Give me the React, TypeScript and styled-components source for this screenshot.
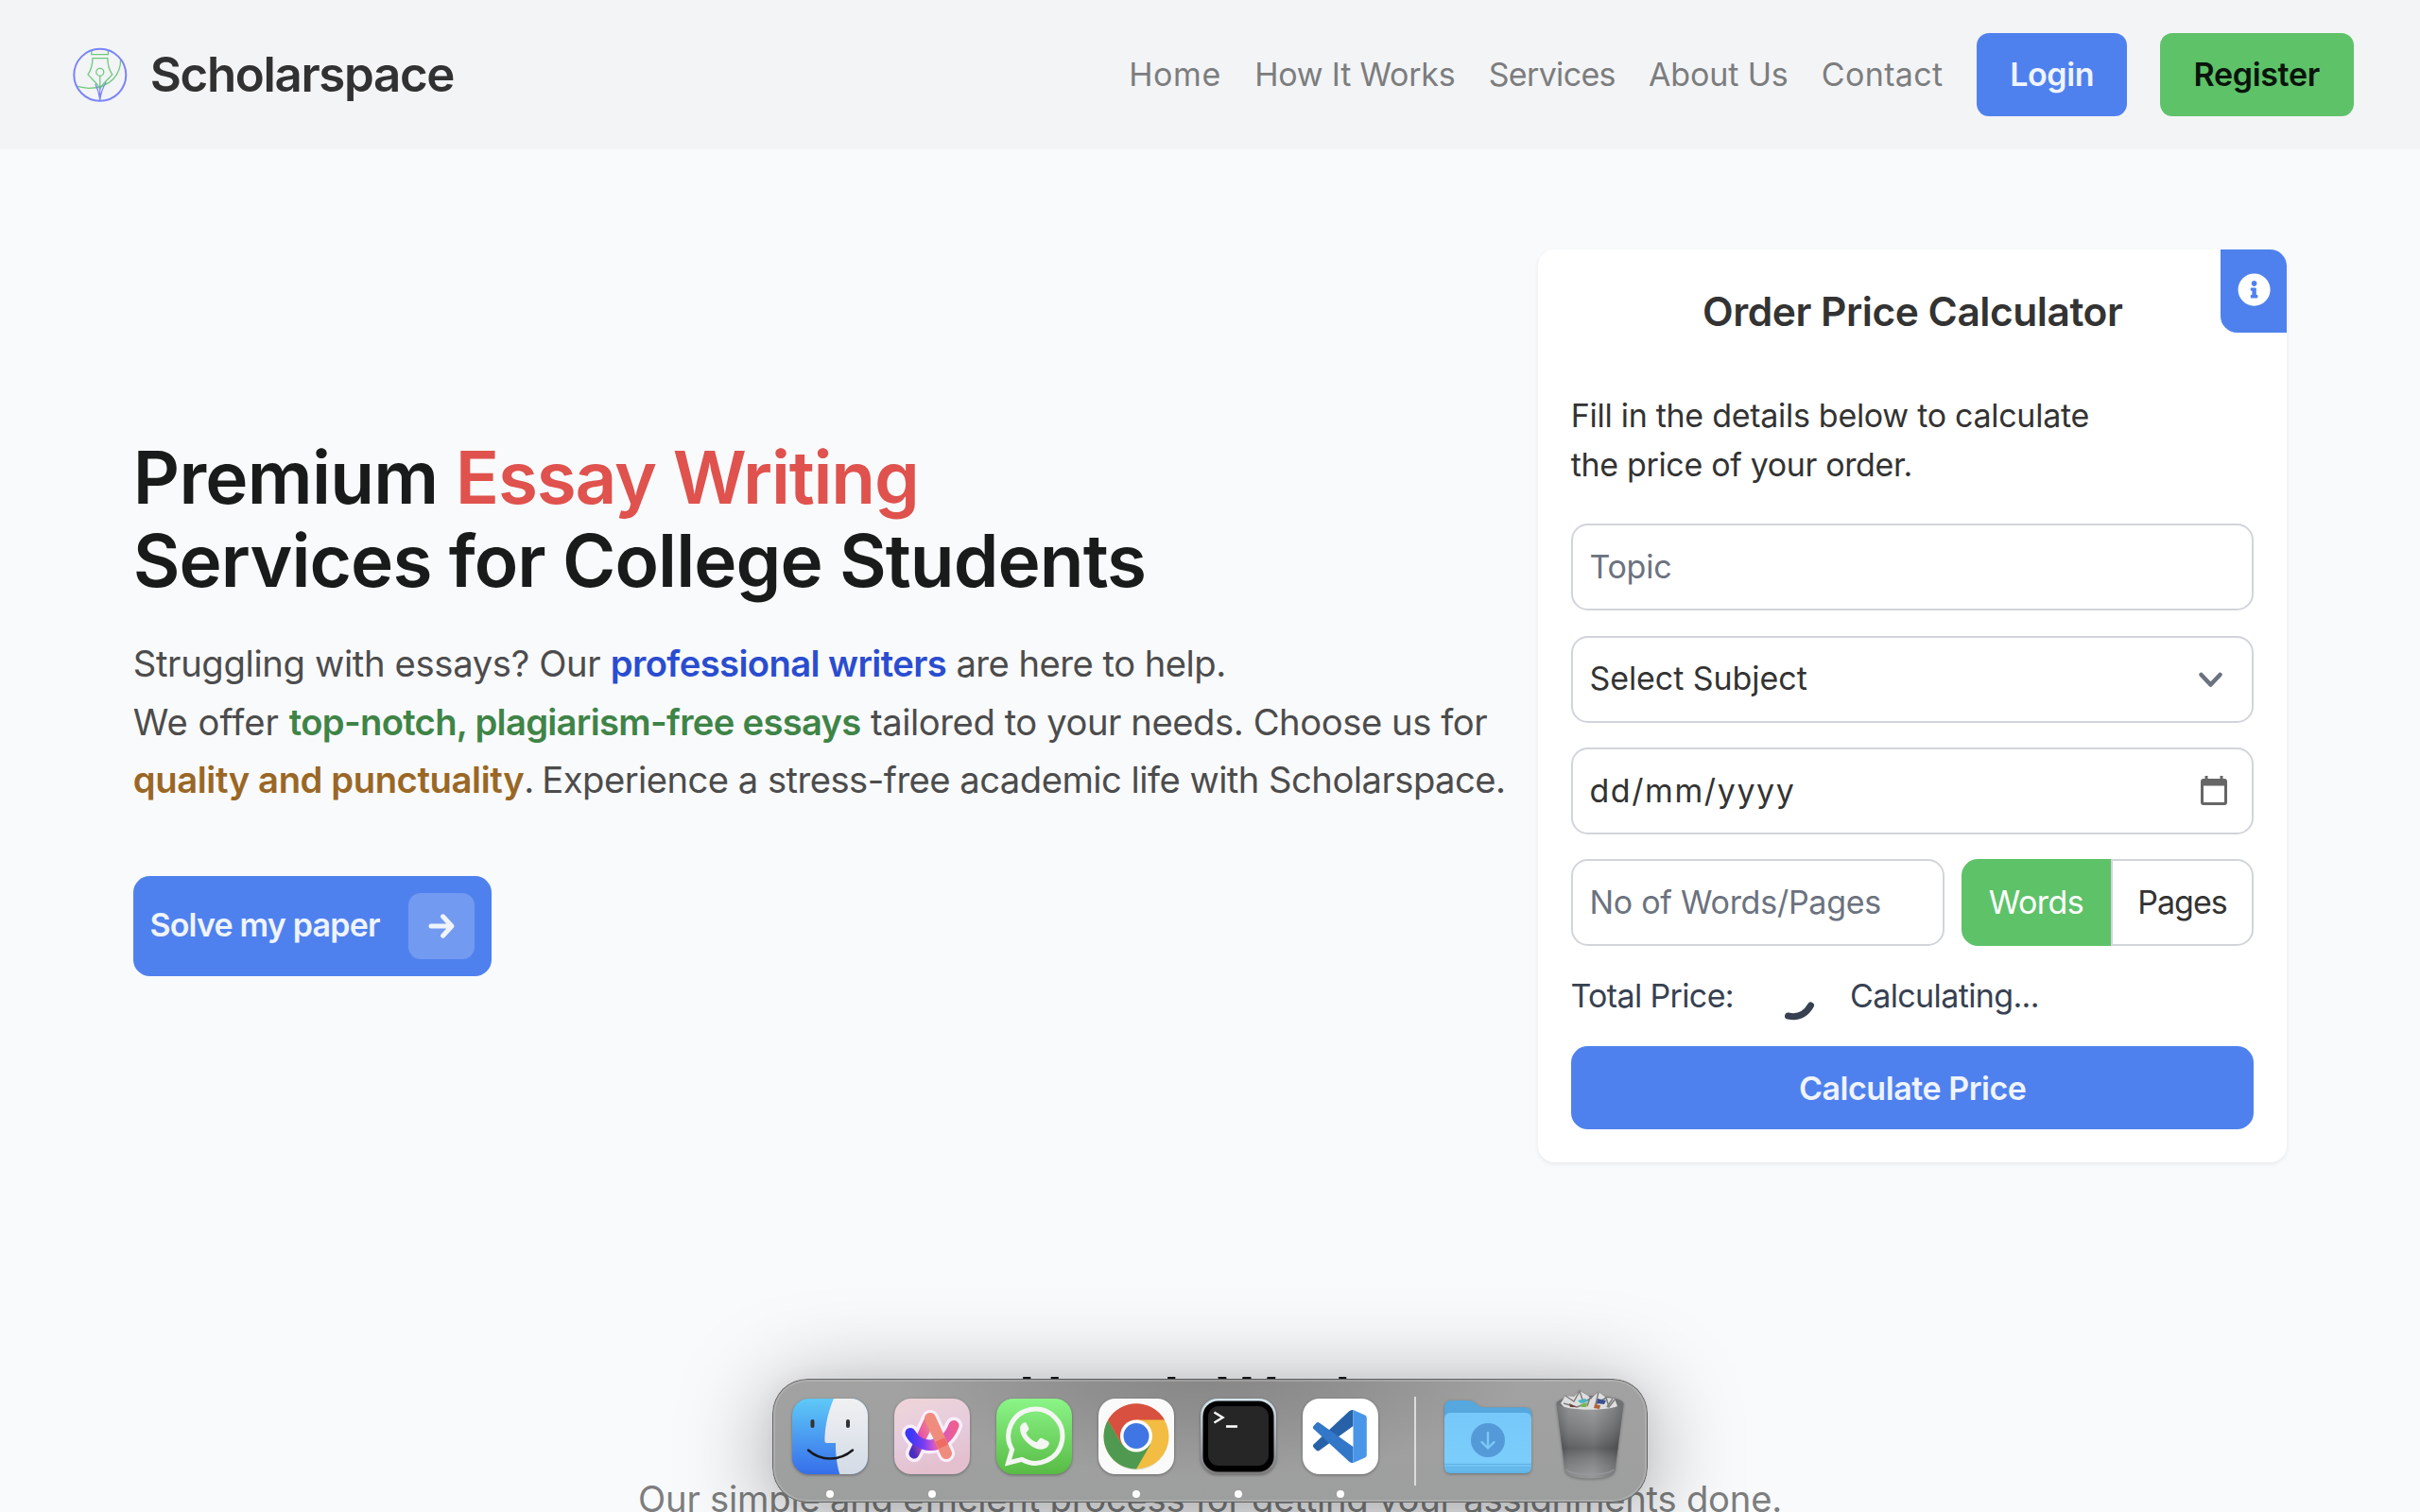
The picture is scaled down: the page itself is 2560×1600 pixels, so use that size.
import React from "react";
import styled, { createGlobalStyle } from "styled-components";
import { FaInfoCircle } from "react-icons/fa";

const Global = createGlobalStyle`
  *, *::before, *::after { box-sizing: border-box; }
  html { font-size: 35.2px; }
  body {
    margin: 0;
    background: #f9fafc;
    font-family: Inter, "Liberation Sans", sans-serif;
    font-size: 34px;
    line-height: 52.8px;
    color: #333;
    -webkit-font-smoothing: antialiased;
  }
  h1, h2, h3, p { margin: 0; }
  button { font: inherit; border: 0; padding: 0; margin: 0; cursor: pointer; }
`;

const Page = styled.div`
  width: 2560px;
  height: 1600px;
  overflow: hidden;
`;

/* A run of text with its own tracking, in em. */
const Track = styled.span<{ $ls: number }>`
  letter-spacing: ${(p) => p.$ls}em;
  white-space: nowrap;
`;

/* ---------- header ---------- */

const Header = styled.header`
  display: flex;
  align-items: center;
  justify-content: space-between;
  height: 158.4px;
  padding: 0 70.4px;
  background: #f3f4f6;
`;

const Brand = styled.a`
  display: flex;
  align-items: center;
  gap: 18px;
  font-size: 51px;
  font-weight: 600;
  color: #313131;
`;

const LogoMark = styled.svg`
  width: 70.4px;
  height: 70.4px;
  display: block;
  fill: none;
`;

const Nav = styled.nav`
  display: flex;
  align-items: center;
  gap: 35.2px;
`;

const NavLink = styled.a`
  color: #7c7d7e;
`;

const Button = styled.button<{ $tone: "blue" | "green"; $w?: string; $pad?: string; $r?: string }>`
  height: 88px;
  width: ${(p) => p.$w ?? "auto"};
  padding: ${(p) => p.$pad ?? "0"};
  border-radius: ${(p) => p.$r ?? "13.2px"};
  font-weight: 600;
  text-align: center;
  background: ${(p) => (p.$tone === "blue" ? "#4f81ee" : "#5ec269")};
  color: ${(p) => (p.$tone === "blue" ? "#eff4fe" : "#0a140b")};
`;

/* ---------- hero ---------- */

const Hero = styled.main`
  display: flex;
  align-items: center;
  justify-content: space-between;
  padding: 105.6px 140.8px 0;
`;

const Pitch = styled.section`
  display: flex;
  flex-direction: column;
  align-items: flex-start;
`;

const Headline = styled.h1`
  font-size: 76.5px;
  line-height: 88px;
  font-weight: 600;
  color: #191b1a;
  white-space: nowrap;
`;

const Lead = styled.p`
  margin-top: 34.8px;
  font-size: 38.2px;
  line-height: 61.6px;
  color: #4c4c4c;
  white-space: nowrap;
`;

const Tint = styled(Track)<{ $c: string }>`
  color: ${(p) => p.$c};
  font-weight: 600;
`;

const SolveButton = styled.button`
  display: flex;
  align-items: center;
  justify-content: space-between;
  width: 379px;
  height: 105.6px;
  margin-top: 70.4px;
  padding: 0 17.6px;
  border-radius: 17.6px;
  background: #4f81ee;
  color: #eff4fe;
  font-weight: 600;
`;

const SolveLabel = styled(Track)`
  padding-bottom: 1px;
`;

const ArrowBox = styled.span`
  display: grid;
  place-items: center;
  width: 70.4px;
  height: 70.4px;
  border-radius: 13.2px;
  background: rgba(255, 255, 255, 0.2);
`;

/* ---------- calculator ---------- */

const Card = styled.section`
  position: relative;
  display: flex;
  flex-direction: column;
  width: 792px;
  height: 966.4px;
  padding: 35.2px;
  border-radius: 17.6px;
  background: #fff;
  box-shadow: 0 2px 5px rgba(0, 0, 0, 0.07);
`;

const InfoTab = styled.button`
  position: absolute;
  top: 0;
  right: 0;
  display: grid;
  place-items: center;
  width: 70.4px;
  height: 88px;
  padding: 0 0 2px 1px;
  border-radius: 0 17.6px 0 17.6px;
  background: #4f81ee;
  color: #fff;
  font-size: 35.2px;
`;

const CardTitle = styled.h3`
  font-size: 42.5px;
  line-height: 61.6px;
  font-weight: 600;
  text-align: center;
`;

const CardText = styled.p`
  margin: 53.6px 0 35.8px -0.6px;
  line-height: 52px;
`;

const Fields = styled.div`
  display: flex;
  flex-direction: column;
  gap: 26.4px;
`;

const Field = styled.div<{ $muted?: boolean; $w?: string }>`
  display: flex;
  align-items: center;
  justify-content: space-between;
  width: ${(p) => p.$w ?? "100%"};
  height: 92px;
  padding: 0 26px 0 17px;
  border: 2px solid #d1d5db;
  border-radius: 17.6px;
  color: ${(p) => (p.$muted ? "#6b7280" : "#333")};
`;

const FieldRow = styled.div`
  display: flex;
  justify-content: space-between;
`;

const Toggle = styled.div`
  display: flex;
  width: 309px;
  height: 92px;
`;

const ToggleOption = styled.button<{ $on?: boolean }>`
  width: ${(p) => (p.$on ? "158px" : "151px")};
  border: ${(p) => (p.$on ? "0" : "2px solid #d1d5db")};
  border-radius: ${(p) => (p.$on ? "17.6px 0 0 17.6px" : "0 17.6px 17.6px 0")};
  background: ${(p) => (p.$on ? "#5ec269" : "#fff")};
  color: ${(p) => (p.$on ? "#fff" : "#333")};
`;

const Total = styled.div`
  display: flex;
  align-items: center;
  height: 52.8px;
  margin-left: -1px;
  color: #374151;
`;

const Spinner = styled.svg`
  width: 70px;
  height: 52.8px;
  margin: 0 27.5px 0 25.5px;
  overflow: visible;
  fill: none;
`;

/* ---------- next section ---------- */

const Steps = styled.section`
  display: flex;
  flex-direction: column;
  align-items: center;
  padding-top: 210.5px;
  text-align: center;
`;

const StepsTitle = styled.h2`
  font-size: 63px;
  line-height: 79.2px;
  font-weight: 600;
  color: #161616;
`;

const StepsText = styled.p`
  margin-top: 35.5px;
  font-size: 38.2px;
  line-height: 61.6px;
  color: #7d7e7e;
`;

/* ---------- dock ---------- */

const Dock = styled.aside`
  position: absolute;
  left: 817px;
  top: 1459px;
  display: flex;
  align-items: flex-start;
  width: 926px;
  height: 131px;
  padding: 19px 0 0 19px;
  border-radius: 37px;
  background: radial-gradient(ellipse 330px 110px at 462px -6px, #868686, #8f908f 45%, rgba(160, 161, 160, 0) 100%),
    linear-gradient(#a1a2a1, #9d9f9e);
  box-shadow: inset 0 0 0 1px rgba(40, 40, 40, 0.55), inset 0 0 0 3px rgba(205, 205, 205, 0.3),
    0 14px 100px rgba(0, 0, 0, 0.36), 0 2px 24px rgba(0, 0, 0, 0.05);
`;

const DockItem = styled.div`
  display: flex;
  flex-direction: column;
  align-items: center;
  width: 84px;
  margin-right: 24px;
`;

const DockIcon = styled.svg`
  width: 84px;
  height: 84px;
  display: block;
  overflow: visible;
  filter: drop-shadow(0 1px 1.5px rgba(0, 0, 0, 0.35));
`;

const RunningDot = styled.span`
  width: 8px;
  height: 8px;
  margin-top: 15px;
  border-radius: 50%;
  background: #fff;
`;

const Divider = styled.span`
  width: 2px;
  height: 94px;
  margin: 0 30px 0 12px;
  background: #dcdcdc;
`;

const DockArt = styled.svg<{ $w: number; $mr?: number; $up?: number }>`
  width: ${(p) => p.$w}px;
  height: 96px;
  margin-right: ${(p) => p.$mr ?? 0}px;
  margin-top: ${(p) => -(p.$up ?? 0)}px;
  overflow: visible;
  filter: drop-shadow(0 1px 1.5px rgba(0, 0, 0, 0.3));
`;

const Logo = () => (
  <LogoMark viewBox="-0.8 -0.3 70.4 70.4" strokeWidth="1.3">
    <g stroke="#6cc97c">
      <path d="M26 9.600v3.700h17.600V9.600" />
      <path d="M35 50C33 44.500 28 41 22.200 34.600 26 29.500 27 24 27.200 17.300h15.800C43.200 24 44.200 29.500 48 34.600 42.200 41 37 44.500 35 50" />
      <circle cx="35" cy="32" r="4" />
      <path d="M35 36v13M56.800 18.500C57 33 47.500 49 23 49c-4 0-7.500-.6-11.500-1.800" />
    </g>
    <g stroke="#7b84f8">
      <path d="M30 44.500c2.500 5 4.400 11.500 5 17.500.6-6 2.500-13 6.500-19.500M35 47v15" strokeWidth="1.2" />
      <circle cx="35" cy="35" r="27.500" strokeWidth="2" />
    </g>
  </LogoMark>
);

const Finder = () => (
  <DockIcon viewBox="-2 0 84 84">
    <defs>
      <linearGradient id="fb" x2="0" y2="1"><stop stopColor="#5fc9f8" /><stop offset="1" stopColor="#366eea" /></linearGradient>
      <linearGradient id="fw" x2="0" y2="1"><stop stopColor="#f1f1f3" /><stop offset="1" stopColor="#d3dbe6" /></linearGradient>
      <clipPath id="fc"><rect y="2" width="80" height="80" rx="18" /></clipPath>
    </defs>
    <g clipPath="url(#fc)">
      <rect y="2" width="80" height="80" fill="url(#fb)" />
      <path d="M44 2C37 18 34.500 34 34.400 46.500q0 2.500 2 2.500H46c-.3 12 1.500 24 4.300 33H80V2z" fill="url(#fw)" />
    </g>
    <path d="M21.500 26v5M59 26v5" stroke="#333" strokeWidth="4" strokeLinecap="round" />
    <path d="M17 56.500c13 12 33 12 47 0" stroke="#17191d" strokeWidth="2.4" fill="none" strokeLinecap="round" />
  </DockIcon>
);

const Arc = () => (
  <DockIcon viewBox="-2 0 84 84">
    <defs>
      <linearGradient id="ab" x2=".3" y2="1"><stop stopColor="#efd5d8" /><stop offset=".6" stopColor="#e5cbdd" /><stop offset="1" stopColor="#e4bfcd" /></linearGradient>
      <linearGradient id="ap" x1="0" x2="1" y1="1" y2="0"><stop stopColor="#4a2cc0" /><stop offset=".5" stopColor="#e957a8" /><stop offset="1" stopColor="#f08a80" /></linearGradient>
      <linearGradient id="as" x2="1"><stop stopColor="#3b37f5" /><stop offset=".4" stopColor="#7a3df2" /><stop offset=".7" stopColor="#d557c8" /><stop offset="1" stopColor="#ee5f90" /></linearGradient>
    </defs>
    <rect y="2" width="80" height="80" rx="18" fill="url(#ab)" />
    <g fill="none" strokeLinecap="round" strokeLinejoin="round">
      <path d="M21 60 38 23 55 60M17 38.500c9 18 36 18 46-8" stroke="#f8effb" strokeWidth="18" />
      <path d="M17 38.500c9 18 36 18 46-8" stroke="url(#as)" strokeWidth="11" />
      <path d="M21 60 38 23" stroke="url(#ap)" strokeWidth="11" />
      <path d="M17 38.500c7 13 24 17.500 36 7.500" stroke="url(#as)" strokeWidth="11" strokeLinecap="butt" />
      <path d="M38 23 55 60" stroke="#f08c7e" strokeWidth="12" />
      <path d="M48.300 45.500l3.500 7.500" stroke="#ee6c63" strokeWidth="11" strokeLinecap="butt" />
    </g>
    <path d="M34 43.500 38 39l3.500 5q-3.500.8-7.500-.5z" fill="#f8effb" />
  </DockIcon>
);

const WhatsApp = () => (
  <DockIcon viewBox="-2 0 84 84">
    <defs><linearGradient id="wa" x2="0" y2="1"><stop stopColor="#8bf587" /><stop offset="1" stopColor="#58bb45" /></linearGradient></defs>
    <rect y="2" width="80" height="80" rx="18" fill="url(#wa)" />
    <path d="M12.500 70 16.600 56A28.600 28.600 0 1 1 27 66.400z" fill="none" stroke="#f4f6f3" strokeWidth="5" />
    <path d="M30.500 27.200c-1.400-.2-5.200 1.600-5.400 6.400C25 45 39 56 47.500 55.800c4.500-.3 8.200-3 8.300-6.200 0-1.500-.3-2-1.500-2.600l-6-3c-1.300-.5-2-.2-2.800.8l-2 2.500c-.7.8-1.300.8-2.200.4-4-1.700-7.300-4.600-9.500-8.500-.4-.8-.2-1.300.4-2l1.700-2c.6-.8.6-1.300.3-2.200l-2.500-5c-.3-.6-.6-.8-1.200-.8z" fill="#f4f6f3" />
  </DockIcon>
);

const Chrome = () => (
  <DockIcon viewBox="-2 0 84 84">
    <rect y="2" width="80" height="80" rx="18" fill="#fafafa" />
    <circle cx="40" cy="43.500" r="34" fill="#b9c7ac" opacity=".45" />
    <circle cx="40" cy="42" r="34.500" fill="#f2bd42" />
    <path d="M10.100 24.800A34.500 34.500 0 0 0 40 76.500L55 50.600 40 42 25 50.600z" fill="#4f9a50" />
    <path d="M10.100 24.800A34.500 34.500 0 0 1 69.900 24.400L40 24.400 25 50.600z" fill="#d8503f" />
    <circle cx="40" cy="41.500" r="17" fill="#fff" />
    <circle cx="40" cy="41.500" r="13.500" fill="#3f76e4" />
  </DockIcon>
);

const Terminal = () => (
  <DockIcon viewBox="-2 0 84 84">
    <defs><linearGradient id="tb" x2="0" y2="1"><stop stopColor="#d6e6ee" /><stop offset="1" stopColor="#7d7a7c" /></linearGradient></defs>
    <rect y="2" width="80" height="80" rx="18" fill="url(#tb)" />
    <rect x="2.500" y="4.500" width="75" height="75" rx="16" fill="#000" />
    <rect x="8" y="10" width="64" height="63" rx="11" fill="#262626" />
    <path d="M14.500 16.500 23.500 22l-9 5.500" fill="none" stroke="#fff" strokeWidth="2.4" />
    <path d="M27 31.500h12" stroke="#fff" strokeWidth="2.6" />
  </DockIcon>
);

const Code = () => (
  <DockIcon viewBox="-2 0 84 84">
    <rect y="2" width="80" height="80" rx="18" fill="#fff" />
    <path d="M53.500 14v17L17.500 57q-1.500 1-3-.3L11.500 53.500q-1.200-1.500 0-3L49 15.500q2-2 4.500-1.500z" fill="#2762a8" />
    <path d="M53.500 70V53L17.500 27.500q-1.500-1-3 .3L11.500 31q-1.200 1.500 0 3L49 68.500q2 2 4.500 1.500z" fill="#3277c8" />
    <path d="M53.500 14 66 19.500q1.800 1 1.800 3v39q0 2-1.800 3L53.500 70z" fill="#4996e9" />
  </DockIcon>
);

const Folder = () => (
  <DockArt $w={92} $mr={26} viewBox="0 0 92 96">
    <defs><linearGradient id="fo" x2="0" y2="1"><stop stopColor="#76c8fa" /><stop offset=".8" stopColor="#7bcdfb" /><stop offset="1" stopColor="#5eb2e6" /></linearGradient></defs>
    <path d="M0 12q0-8 7-8h19q3 0 5 1.600l5 4q2 1.600 5 1.600h44q7 0 7 7v20H0z" fill="#55a7dd" />
    <rect y="17" width="92" height="64" rx="6" fill="url(#fo)" />
    <path d="M0 71.500h92M0 75h92" stroke="#58abe0" strokeWidth="1" opacity=".7" />
    <circle cx="46" cy="46" r="18" fill="#559ad8" />
    <path d="M46 38v16M39.500 48l6.500 6.500 6.500-6.500" fill="none" stroke="#7cc8f8" strokeWidth="2.4" strokeLinecap="round" strokeLinejoin="round" />
  </DockArt>
);

const Trash = () => (
  <DockArt $w={72} $up={7} viewBox="0 0 72 96">
    <defs>
      <linearGradient id="tr" x2="1"><stop stopColor="#555759" /><stop offset=".18" stopColor="#77797b" /><stop offset=".55" stopColor="#858789" /><stop offset=".85" stopColor="#66686a" /><stop offset="1" stopColor="#4d4f51" /></linearGradient>
      <linearGradient id="ts" x2="0" y2="1"><stop stopColor="#fff" stopOpacity=".18" /><stop offset=".6" stopColor="#222" stopOpacity=".3" /><stop offset="1" stopColor="#fff" stopOpacity=".15" /></linearGradient>
    </defs>
    <ellipse cx="36" cy="14" rx="35.500" ry="8" fill="#707274" />
    <path d="M5 14l5-8 9 1 6-6 9 5 3 3 8-7 8 6 9 1 3 8-8 5-22 2-24-3z" fill="#dedede" />
    <path d="M10 6l9 6 6-11 4 12 9-5M45 2l-3 13 11-7 3 10 7-9M8 14l14 4 8-3M36 8l-3 9M60 9l-6 9" fill="none" stroke="#7d7d7d" strokeWidth="1.5" />
    <path d="M23 11l8-2 3 3-8 2z" fill="#46b7c6" />
    <path d="M26 15l7-2-1 5-5 0z" fill="#74b84e" />
    <path d="M44 9l9 2-2 4-8-1z" fill="#3a4f90" />
    <path d="M41 15l6 1-1 4-6-1z" fill="#b0603a" />
    <path d="M14 14l8 4-7 0z" fill="#6d3f38" />
    <path d="M.5 14C8 23 64 23 71.500 14L62.500 84.500q-2 9-26.500 9t-26.500-9z" fill="url(#tr)" />
    <path d="M.5 14C8 23 64 23 71.500 14L62.500 84.500q-2 9-26.500 9t-26.500-9z" fill="url(#ts)" />
    <path d="M10.500 84c8 7 43 7 51 0" fill="none" stroke="#9a9c9e" strokeWidth="1.5" opacity=".7" />
  </DockArt>
);

export default function App() {
  return (
    <Page>
      <Global />
      <Header>
        <Brand>
          <Logo />
          <Track $ls={-0.0265}>Scholarspace</Track>
        </Brand>
        <Nav>
          <NavLink><Track $ls={0.018}>Home</Track></NavLink>
          <NavLink><Track $ls={-0.006}>How It Works</Track></NavLink>
          <NavLink><Track $ls={-0.02}>Services</Track></NavLink>
          <NavLink><Track $ls={-0.004}>About Us</Track></NavLink>
          <NavLink><Track $ls={0.01}>Contact</Track></NavLink>
          <Button $tone="blue" $w="159px" $pad="0 0 0 1px"><Track $ls={-0.012}>Login</Track></Button>
          <Button $tone="green" $w="204.8px"><Track $ls={-0.0095}>Register</Track></Button>
        </Nav>
      </Header>

      <Hero>
        <Pitch>
          <Headline>
            <Track $ls={-0.01}>Premium </Track>
            <Tint $ls={-0.016} $c="#df524d">Essay Writing</Tint>
            <br />
            <Track $ls={-0.0125}>Services for College Students</Track>
          </Headline>
          <Lead>
            <Track $ls={-0.009}>Struggling with essays? Our </Track>
            <Tint $ls={-0.0157} $c="#2a4dd0">professional writers</Tint>
            <Track $ls={-0.0135}> are here to help.</Track>
            <br />
            <Track $ls={0.001}>We offer </Track>
            <Tint $ls={-0.0182} $c="#3f8447">top-notch, plagiarism-free essays</Tint>
            <Track $ls={-0.0113}> tailored to your needs. Choose us for</Track>
            <br />
            <Tint $ls={-0.0105} $c="#9a6725">quality and punctuality</Tint>
            <Track $ls={-0.035}>. </Track>
            <Track $ls={-0.0138}>Experience a stress-free academic life with Scholarspace.</Track>
          </Lead>
          <SolveButton>
            <SolveLabel $ls={-0.0235}>Solve my paper</SolveLabel>
            <ArrowBox>
              <svg width="30" height="30" viewBox="0 0 30 30" fill="none" stroke="#eff4fe" strokeWidth="5" strokeLinecap="round" strokeLinejoin="round">
                <path d="M4 15h21M16.500 4.800 26 15l-9.500 10.200" />
              </svg>
            </ArrowBox>
          </SolveButton>
        </Pitch>

        <Card>
          <InfoTab><FaInfoCircle /></InfoTab>
          <CardTitle><Track $ls={-0.0112}>Order Price Calculator</Track></CardTitle>
          <CardText>
            <Track $ls={-0.0085}>Fill in the details below to calculate</Track>
            <br />
            <Track $ls={-0.0102}>the price of your order.</Track>
          </CardText>
          <Fields>
            <Field $muted><Track $ls={-0.0066}>Topic</Track></Field>
            <Field>
              <Track $ls={-0.0017}>Select Subject</Track>
              <svg width="36" height="38" viewBox="0 0 36 38" fill="none" stroke="#6b7280" strokeWidth="4.6" strokeLinecap="round" strokeLinejoin="round">
                <path d="M8.500 14 18.500 24.500 28.500 14" />
              </svg>
            </Field>
            <Field>
              <Track $ls={0.047}>dd/mm/yyyy</Track>
              <svg width="28" height="34" viewBox="0 0 28 34">
                <path d="M4.500 1h3v3h13V1h3v3H25q3 0 3 3v22q0 3-3 3H3q-3 0-3-3V7q0-3 3-3h1.500zM3 11.500V29h22V11.500z" fill="#666" fillRule="evenodd" />
              </svg>
            </Field>
            <FieldRow>
              <Field $muted $w="395px"><Track $ls={-0.0074}>No of Words/Pages</Track></Field>
              <Toggle>
                <ToggleOption $on><Track $ls={-0.0156}>Words</Track></ToggleOption>
                <ToggleOption><Track $ls={-0.03}>Pages</Track></ToggleOption>
              </Toggle>
            </FieldRow>
            <Total>
              <Track $ls={-0.0185}>Total Price:</Track>
              <Spinner viewBox="0 0 70 52.8">
                <path d="M31.500 47Q47 50.500 55.500 36" stroke="#374151" strokeWidth="7" strokeLinecap="round" />
              </Spinner>
              <Track $ls={-0.0185}>Calculating...</Track>
            </Total>
            <Button $tone="blue" $w="100%" $r="17.6px" $pad="2px 0 0"><Track $ls={-0.0135}>Calculate Price</Track></Button>
          </Fields>
        </Card>
      </Hero>

      <Steps>
        <StepsTitle><Track $ls={-0.001}>How It Works</Track></StepsTitle>
        <StepsText><Track $ls={-0.0057}>Our simple and efficient process for getting your assignments done.</Track></StepsText>
      </Steps>

      <Dock>
        <DockItem><Finder /><RunningDot /></DockItem>
        <DockItem><Arc /><RunningDot /></DockItem>
        <DockItem><WhatsApp /></DockItem>
        <DockItem><Chrome /><RunningDot /></DockItem>
        <DockItem><Terminal /><RunningDot /></DockItem>
        <DockItem><Code /><RunningDot /></DockItem>
        <Divider />
        <Folder />
        <Trash />
      </Dock>
    </Page>
  );
}
